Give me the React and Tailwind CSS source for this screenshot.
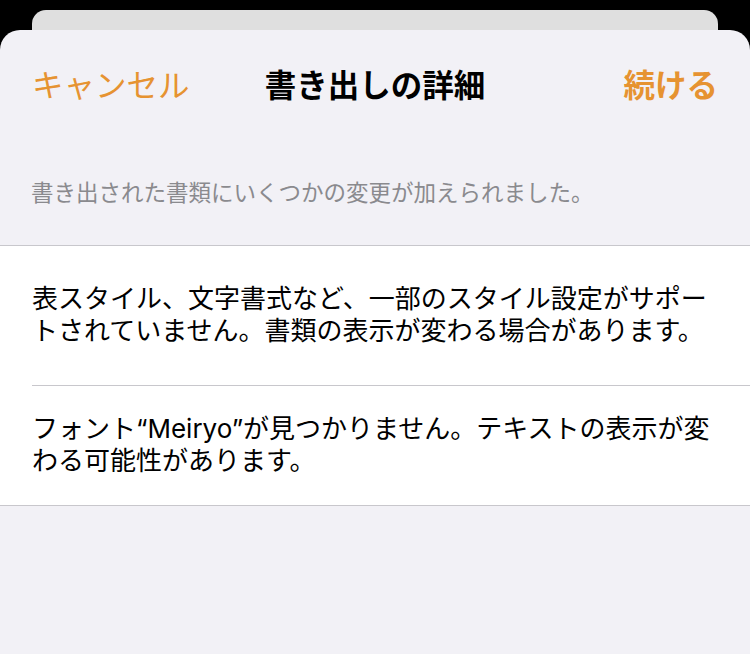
const font = { fontFamily: 'Inter, "Noto Sans CJK JP", sans-serif' };

const rows = [
  {
    id: 'style',
    text: '表スタイル、文字書式など、一部のスタイル設定がサポートされていません。書類の表示が変わる場合があります。',
    pad: 'pt-[37px] pb-[38px]',
  },
  {
    id: 'font',
    text: 'フォント“Meiryo”が見つかりません。テキストの表示が変わる可能性があります。',
    pad: 'pt-[27px] pb-[28px]',
  },
];

const App = () => {
  return (
    <div className="h-[654px] w-full overflow-hidden bg-black pt-[10px] flex flex-col" style={font}>
      <div className="mx-[32px] h-[20px] rounded-t-[14px] bg-[#dfdfdf]"></div>

      <div className="flex-1 rounded-t-[20px] bg-[#f2f1f6] flex flex-col">
        {/* header */}
        <div className="h-[112px] grid grid-cols-[1fr_auto_1fr] items-center px-[32px]">
          <button className="justify-self-start text-[31.5px] leading-none text-[#e69331]">キャンセル</button>
          <h1 className="text-[31.5px] leading-none font-bold text-black">書き出しの詳細</h1>
          <button className="justify-self-end text-[31.5px] leading-none font-bold text-[#e69331]">続ける</button>
        </div>

        <p className="px-[31px] pt-[36px] pb-[37px] text-[22.5px] leading-[30px] text-[#8a8a8e]">
          書き出された書類にいくつかの変更が加えられました。
        </p>

        <ul className="bg-white border-y border-[#c8c7cc]">
          {rows.map((row, i) => (
            <li key={row.id} className="pl-[32px]">
              <div
                className={`${row.pad} pr-[28px] text-[26px] leading-[32px] text-black ${
                  i < rows.length - 1 ? 'border-b border-[#c8c7cc]' : ''
                }`}
              >
                {row.text}
              </div>
            </li>
          ))}
        </ul>
      </div>
    </div>
  );
};

export default App;
